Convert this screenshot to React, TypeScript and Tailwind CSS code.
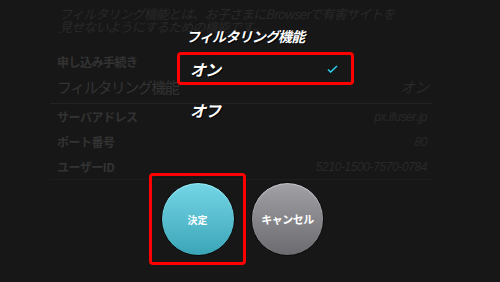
// Filtering setting screen with selection dialog over the dimmed settings list

const jp = "font-['Noto_Sans_CJK_JP','Noto_Sans',sans-serif]";

const rows = [
  { label: "サーバアドレス", value: "px.ifuser.jp" },
  { label: "ポート番号", value: "80" },
  { label: "ユーザーID", value: "5210-1500-7570-0784" },
];

export default function App() {
  return (
    <div className={`relative w-[500px] h-[282px] overflow-hidden bg-[#171717] ${jp}`}>
      {/* Dimmed settings page */}
      <div className="flex flex-col pt-[7px]">
        <div className="ml-[59px] text-[13px] leading-[13px] italic text-[#292929] tracking-[-0.85px]">
          <p>フィルタリング機能とは、お子さまにBrowserで有害サイトを</p>
          <p>見せないようにするための機能です。</p>
        </div>

        <div className="ml-[57px] mt-[21px] text-[12px] leading-[16px] font-bold text-[#333333] tracking-[-0.5px]">
          申し込み手続き
        </div>
        <div className="ml-[57px] w-[371px] mt-[7px] flex items-center justify-between">
          <span className="text-[15px] leading-[20px] text-[#333333] tracking-[-1.5px]">フィルタリング機能</span>
          <span className="text-[15px] leading-[20px] italic text-[#292929] tracking-[-1px]">オン</span>
        </div>
        <div className="ml-[50px] w-[383px] h-px bg-[#222222] mt-[6px]" />

        <div className="flex flex-col gap-[9px] mt-[5px]">
          {rows.map((r) => (
            <div key={r.label} className="ml-[57px] w-[370px] flex items-center justify-between">
              <span className="text-[12px] leading-[16px] font-bold text-[#333333] tracking-[-0.5px]">{r.label}</span>
              <span className="text-[12px] leading-[16px] italic text-[#292929] font-['Liberation_Sans',sans-serif] tracking-[-0.4px]">
                {r.value}
              </span>
            </div>
          ))}
        </div>
        <div className="ml-[50px] w-[383px] h-px bg-[#1d1d1d] mt-[4px]" />
      </div>

      {/* Selection dialog */}
      <div className="absolute inset-0 flex flex-col">
        <div className="ml-[186px] mt-[27px] text-[14px] leading-[18px] italic font-semibold text-white tracking-[-0.8px] [text-shadow:1px_1px_0_#000]">
          フィルタリング機能
        </div>
        <div className="ml-[177px] mt-[7px] w-[177px] h-[33px] border-[3px] border-[#ff0000] rounded-[4px] flex items-center justify-between pl-[10px] pr-[13px]">
          <span className="text-[16px] leading-[20px] font-bold text-white tracking-[-1px] italic [text-shadow:1px_1px_0_#000]">オン</span>
          <svg width="11" height="8" viewBox="0 0 11 8" fill="none">
            <path d="M1 4.5 L3.6 7 L10 1" stroke="#2ccbec" strokeWidth="1.6" />
          </svg>
        </div>
        <div className="ml-[190px] mt-[15px] text-[16px] leading-[20px] font-bold text-white tracking-[-1px] italic [text-shadow:1px_1px_0_#000]">
          オフ
        </div>

        <div className="ml-[149px] mt-[53px] flex items-center gap-[5px]">
          <div className="w-[97px] h-[92px] border-[3px] border-[#ff0000] rounded-[4px] flex items-center justify-center">
            <button className="w-[74px] h-[74px] rounded-full border border-[#0a0a0a] bg-gradient-to-b from-[#74d6e6] to-[#3aa5b8] shadow-[inset_0_1px_1px_#9feaf5] flex items-center justify-center text-white text-[10px] font-bold">
              決定
            </button>
          </div>
          <button className="w-[73px] h-[74px] rounded-full border border-[#0a0a0a] bg-gradient-to-b from-[#a2a2a6] to-[#6c6c70] shadow-[inset_0_1px_1px_#c4c4c8] flex items-center justify-center text-white text-[11px] font-bold tracking-[-0.5px]">
            キャンセル
          </button>
        </div>
      </div>
    </div>
  );
}
